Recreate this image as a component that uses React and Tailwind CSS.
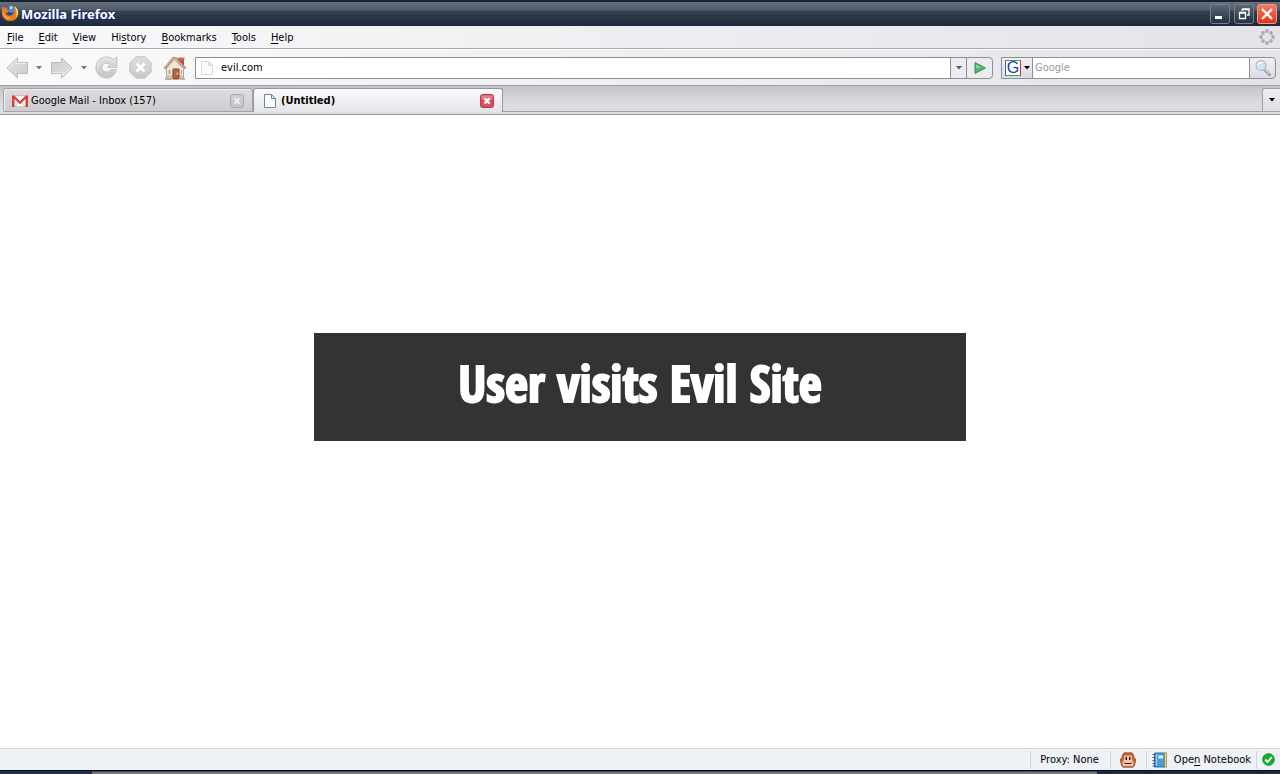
import React from 'react';

const ui = "font-['DejaVu_Sans_Condensed','DejaVu_Sans',sans-serif]";

function FirefoxLogo() {
  return (
    <svg width="18" height="18" viewBox="0 0 18 18" aria-hidden="true">
      <circle cx="9.500" cy="8" r="6.500" fill="#1d4a94" />
      <path d="M7 2.500c3-2 6-1 7 1.500l-1 4-3 1-2-2z" fill="#3f8fd6" />
      <path d="M9 2l3 .5-1 2.500-2 .5z" fill="#a9dcf5" />
      <path d="M2 2l1.500 2C5 3 6 3 7 3.500L6 5.500l2.500 1-1.500 2-2 .5c1 3 5 3.500 7 1 1.500-2 1.500-5 .5-7.500C16 4 17.500 6 17.500 9c0 5-4 8-8.500 8s-8-3.500-8-8c0-3 0-5 1-7z" fill="#ee7a1c" />
      <path d="M13 2c4 2 5.500 7 2 11.500C16 9 15.500 5 13 2z" fill="#fbe07a" />
      <path d="M1.500 5c0 5 3.500 9 9 9-4 2.500-10-1-9-9z" fill="#f9b54a" />
    </svg>
  );
}

function Arrow({ flip }) {
  return (
    <svg width="22" height="22" viewBox="0 0 22 22" className={flip ? 'rotate-180' : ''} aria-hidden="true">
      <defs>
        <linearGradient id="arrowFill" x1="0" y1="0" x2="1" y2="1">
          <stop offset="0" stopColor="#e4e4e4" />
          <stop offset="1" stopColor="#cacaca" />
        </linearGradient>
      </defs>
      <path d="M.8 11L11.500 1v4.500h10v11h-10V21z" fill="url(#arrowFill)" stroke="#bcbcbc" strokeLinejoin="round" />
      <path d="M2.500 11l8-7.500v3h10" fill="none" stroke="#ededed" />
    </svg>
  );
}

function Caret({ color = '#000' }) {
  return (
    <svg width="6" height="4" viewBox="0 0 6 4" aria-hidden="true">
      <path d="M0 0h6L3 3.600z" fill={color} />
    </svg>
  );
}

function Reload() {
  return (
    <svg width="23" height="23" viewBox="0 0 23 23" aria-hidden="true">
      <defs>
        <linearGradient id="reloadFill" x1="0" y1="0" x2="0" y2="1">
          <stop offset="0" stopColor="#e0e0e0" />
          <stop offset="1" stopColor="#c6c6c6" />
        </linearGradient>
      </defs>
      <path d="M18.300 3.800L22 1v10.500h-9.500L15 8.500c-4-3-8-.5-8 3 0 5 6.500 6 9 2h5.500C20 19.500 16 22 11.500 22 5.500 22 1 17.500 1 11.500S5.500 1 11.500 1c3 0 5 1 6.800 2.800z" fill="url(#reloadFill)" stroke="#c3c3c3" />
      <path d="M2.500 12C2.500 6 7 2.300 12 2.300c2.500 0 4.500 1 6.500 3L21 3" fill="none" stroke="#eaeaea" />
    </svg>
  );
}

function Stop() {
  return (
    <svg width="23" height="23" viewBox="0 0 23 23" aria-hidden="true">
      <defs>
        <linearGradient id="stopFill" x1="0" y1="0" x2="0" y2="1">
          <stop offset="0" stopColor="#dedede" />
          <stop offset="1" stopColor="#c8c8c8" />
        </linearGradient>
      </defs>
      <path d="M7 .8h9l6.200 6.200v9L16 22.200H7L.8 16V7z" fill="url(#stopFill)" stroke="#c3c3c3" />
      <path d="M7.500 7.500l8 8M15.500 7.500l-8 8" stroke="#fff" strokeWidth="3" />
    </svg>
  );
}

function Home() {
  return (
    <svg width="24" height="24" viewBox="0 0 24 24" aria-hidden="true">
      <path d="M15 2h6v10l-6-6z" fill="#c0533f" />
      <path d="M14.500 1.500h7v2h-7z" fill="#d4705c" />
      <path d="M3.500 12l8-8.500 9 9V22h-17z" fill="#efe5d8" stroke="#b9a893" />
      <path d="M4 19h16v3H4z" fill="#d9c5ab" />
      <path d="M1.500 12.500L10.500 2h2L22.500 12.500" fill="none" stroke="#a98070" strokeWidth="2.200" />
      <path d="M2 11.500L11 2h1l9.500 9.500" fill="none" stroke="#dcc2b2" />
      <path d="M10 13h6v10h-6z" fill="#b0654c" stroke="#854833" />
      <path d="M5.500 14h2v4h-2zM18 14h1v4h-1z" fill="#b5aaa0" />
      <circle cx="14.500" cy="17.500" r="1" fill="#ffdf18" />
      <path d="M2 23h7M17 23h5" stroke="#a8a58b" strokeWidth="1.500" />
    </svg>
  );
}

function Page({ stroke = '#718499' }) {
  return (
    <svg width="12" height="14" viewBox="0 0 12 14" className="shrink-0" aria-hidden="true">
      <path d="M.5.5h7l4 4v9H.5z" fill="#fafcfe" stroke={stroke} />
      <path d="M7.500.5v4h4z" fill="#e5eaf0" stroke={stroke} />
    </svg>
  );
}

function Gmail() {
  return (
    <svg width="16" height="12" viewBox="0 0 16 12" className="shrink-0" aria-hidden="true">
      <path d="M0 1h16v10H0z" fill="#fff" />
      <path d="M3 11l4-4M13 11L9 7" stroke="#e8b5b5" />
      <path d="M0 .5h2.500L8 6.300 13.500.5H16V12h-2.500V4L8 9.200 2.500 4v8H0z" fill="#dc3d3d" />
      <path d="M3 .5h10M3 11.500h10" stroke="#eeb3b3" />
    </svg>
  );
}

function TabClose({ active, label }) {
  return (
    <button aria-label={label} className="shrink-0">
      <svg width="14" height="14" viewBox="0 0 14 14" aria-hidden="true">
        <rect x=".5" y=".5" width="13" height="13" rx="2" fill={active ? '#d9505d' : '#c6c5c9'} stroke={active ? '#b33c48' : '#aaa9ad'} />
        <path d="M1.500 1.500h11v4h-11z" fill={active ? '#e58088' : '#cecdd0'} />
        <path d="M4.500 4.500l5 5M9.500 4.500l-5 5" stroke={active ? '#fff' : '#ededef'} strokeWidth="2.400" />
      </svg>
    </button>
  );
}

function Play() {
  return (
    <svg width="12" height="14" viewBox="0 0 12 14" aria-hidden="true">
      <path d="M1 1.500v11L11.500 7z" fill="#4bb46d" stroke="#3b9358" strokeLinejoin="round" />
      <path d="M2 3.500V7h6z" fill="#8ad3a0" />
    </svg>
  );
}

function Lens() {
  return (
    <svg width="18" height="18" viewBox="0 0 18 18" aria-hidden="true">
      <path d="M10 10l5.500 5.500" stroke="#8b8b8e" strokeWidth="2.800" strokeLinecap="round" />
      <path d="M10.500 10l5 5" stroke="#dadadc" strokeWidth="1.200" />
      <circle cx="7" cy="6.500" r="5" fill="#cbe5f1" stroke="#b4c3cd" strokeWidth="1.300" />
      <path d="M4 6c0-2 2-3 4-2" stroke="#fff" strokeWidth="1.500" fill="none" />
    </svg>
  );
}

const dots = [[8, 2], [12, 4], [14, 8], [12, 12], [8, 14], [4, 12], [2, 8], [4, 4]];

function Throbber() {
  return (
    <svg width="16" height="16" viewBox="0 0 16 16" aria-hidden="true">
      {dots.map(([x, y]) => <circle key={x + '-' + y} cx={x} cy={y} r="1.900" fill="#adadaf" />)}
    </svg>
  );
}

function Monkey() {
  return (
    <svg width="16" height="16" viewBox="0 0 16 16" aria-hidden="true">
      <path d="M4 .8h8l2 3v3h1.500v3.500H14l1.200 2-2.200 3H3l-2.200-3 1.200-2H.5V6.800H2v-3z" fill="#c4653a" stroke="#8f4424" strokeWidth=".7" />
      <path d="M4 4.500l1.500-1h1.500l1 1 1-1h1.500l1.500 1V8l1.800 2.500L13 14H3l-.8-3.500L4 8z" fill="#f8c3a0" />
      <path d="M5.500 5H7v3H5.500zM9 5h1.500v3H9z" fill="#20120e" />
      <path d="M4 10.500l1 1h6l1-1" fill="none" stroke="#351712" />
    </svg>
  );
}

function Notebook() {
  return (
    <svg width="16" height="16" viewBox="0 0 16 16" aria-hidden="true">
      <path d="M2.500 1h10v14h-10z" fill="#4a9cd6" stroke="#2d6ea3" />
      <path d="M12.500.8h2v14.400h-2z" fill="#efd98d" stroke="#8d7b3d" strokeWidth=".7" />
      <path d="M6.500 3.500h4.500v3H6.500z" fill="#e3f3fb" />
      <path d="M4.500 2v12" stroke="#a6d3f0" />
      <path d="M.5 2.500h3M.5 5.500h3M.5 8.500h3M.5 11.500h3M.5 14h3" stroke="#4f5866" />
    </svg>
  );
}

function Check() {
  return (
    <svg width="13" height="13" viewBox="0 0 13 13" aria-hidden="true">
      <circle cx="6.500" cy="6.500" r="6" fill="#14ac28" stroke="#109020" strokeWidth=".6" />
      <path d="M3.200 6.500l2.300 2.600L9.800 4" fill="none" stroke="#fff" strokeWidth="1.900" />
    </svg>
  );
}

const menus = [['', 'F', 'ile'], ['', 'E', 'dit'], ['', 'V', 'iew'], ['Hi', 's', 'tory'], ['', 'B', 'ookmarks'], ['', 'T', 'ools'], ['', 'H', 'elp']];
const frameButton = 'flex h-5 w-5 items-center justify-center rounded-[3px] border';

export default function App() {
  return (
    <div className={`flex min-h-screen flex-col bg-white text-[11px] leading-4 text-black ${ui}`}>
      <header>
        <div className="flex h-[26px] items-center justify-between border-t-2 border-[#1c2030] bg-[linear-gradient(#65717b_0,#505d69_8px,#354251_9px,#1d283a_100%)] pr-[3px] pl-px">
          <div className="flex items-center gap-[2px]">
            <div className="pb-[2px]"><FirefoxLogo /></div>
            <h1 className="font-['Noto_Sans','Open_Sans',sans-serif] text-[13px] leading-4 font-bold text-white [text-shadow:1px_1px_0_#1a1f8c]">Mozilla Firefox</h1>
          </div>
          <div className="flex gap-[3px]">
            <button aria-label="Minimize" className={`${frameButton} border-[#77818b] bg-linear-to-b from-[#596571] to-[#263241]`}>
              <svg width="12" height="12" aria-hidden="true"><path d="M1 8h7v3H1z" fill="#fff" /></svg>
            </button>
            <button aria-label="Restore" className={`${frameButton} ml-px border-[#77818b] bg-linear-to-b from-[#596571] to-[#263241]`}>
              <svg width="12" height="12" aria-hidden="true"><path d="M4 1h7v6H9M4 1.500h7M4 1v2M1.500 4.500h6v6h-6zM1 5h7" fill="none" stroke="#fff" strokeWidth="1.300" /></svg>
            </button>
            <button aria-label="Close" className={`${frameButton} border-[#f09c8d] bg-linear-to-b from-[#f17a61] to-[#e52d0c]`}>
              <svg width="12" height="12" aria-hidden="true"><path d="M1 1l10 10M11 1L1 11" stroke="#fff" strokeWidth="2.400" /></svg>
            </button>
          </div>
        </div>

        <nav aria-label="Menu" className="flex h-[23px] items-center border-b border-[#a9a9ad] bg-linear-to-r from-[#f9f9fb] to-[#e4e3e8] pr-[5px] pl-[7px]">
          <div className="flex flex-1 gap-[15px] pt-[2px]">
            {menus.map(([a, key, b]) => (
              <button key={a + key + b}>{a}<span className="underline underline-offset-2">{key}</span>{b}</button>
            ))}
          </div>
          <Throbber />
        </nav>

        <div className="flex h-9 items-center border-t border-white bg-linear-to-r from-[#fafafb] to-[#e4e3e8] pr-1 pl-[6px]">
          <div className="flex items-center gap-2">
            <button aria-label="Back"><Arrow /></button>
            <button aria-label="Back history" className="mr-px"><Caret color="#77777b" /></button>
            <button aria-label="Forward"><Arrow flip /></button>
            <button aria-label="Forward history"><Caret color="#77777b" /></button>
            <button aria-label="Reload"><Reload /></button>
            <button aria-label="Stop" className="ml-[3px]"><Stop /></button>
            <button aria-label="Home" className="ml-[3px]"><Home /></button>
          </div>
          <div className="ml-2 flex h-[22px] flex-1 rounded-r-[4px] border border-[#8e8e96] bg-[#ececf0]">
            <div className="flex flex-1 items-center gap-2 bg-white pl-[5px]">
              <Page stroke="#d3d9dd" />
              <input aria-label="Address" defaultValue="evil.com" className="h-4 min-w-0 flex-1 bg-transparent outline-none" />
            </div>
            <button aria-label="Show addresses" className="flex w-4 items-center justify-center border-l border-[#8e8e96]"><Caret color="#55555a" /></button>
            <button aria-label="Go" className="flex w-[26px] items-center justify-center border-l border-[#8e8e96]"><Play /></button>
          </div>
          <div className="ml-2 flex h-[22px] w-[275px] rounded-r-[4px] border border-[#8e8e96] bg-linear-to-b from-[#f1f1f4] to-[#dcdbe1]">
            <button aria-label="Choose search engine" className="flex w-[30px] items-center gap-[3px] pl-[3px]">
              <span className="flex h-4 w-4 items-center justify-center border border-t-[#39a849] border-r-[#e32727] border-b-[#39a849] border-l-[#3c63ce] bg-white font-['Liberation_Sans',sans-serif] text-base leading-4 text-[#1d3db4]">G</span>
              <Caret />
            </button>
            <input aria-label="Search" placeholder="Google" className="min-w-0 flex-1 border-x border-[#8e8e96] bg-white px-[2px] outline-none placeholder:text-[#999]" />
            <button aria-label="Search the web" className="flex w-[25px] items-center justify-center"><Lens /></button>
          </div>
        </div>

        <div className="flex h-[30px] items-stretch border-t border-[#a0a0a3] bg-linear-to-b from-[#c4c3c7] via-[#dad9de] to-[#dfdee3]">
          <div role="tablist" className="flex h-full flex-1 border-b border-[#97979a] pt-[2px] pl-[3px]">
            <div className="flex h-6 w-[250px] items-center rounded-t-[3px] border border-[#a3a3a7] bg-linear-to-b from-[#dddce1] to-[#cdccd1] px-2 pt-px shadow-[inset_1px_1px_0_#f0f0f2]">
              <button role="tab" aria-selected="false" className="flex flex-1 items-center gap-[3px]"><Gmail />Google Mail - Inbox (157)</button>
              <TabClose label="Close Google Mail" />
            </div>
            <div className="flex h-6 w-[250px] items-center rounded-t-[3px] border border-b-0 border-[#96969a] bg-linear-to-b from-[#fafafc] to-[#e5e4e9] pr-2 pl-[10px]">
              <button role="tab" aria-selected="true" className="flex flex-1 items-center gap-[5px] font-bold"><Page />(Untitled)</button>
              <TabClose active label="Close Untitled" />
            </div>
            <div className="h-6 flex-1 border-b border-[#a0a0a3]" />
          </div>
          <div className="border-b border-[#97979a] pt-[2px]">
            <button aria-label="List all tabs" className="flex h-6 w-[18px] items-center justify-center rounded-tl-[3px] border border-r-0 border-[#a3a3a7] bg-linear-to-b from-[#f0f0f3] to-[#dedde2]"><Caret /></button>
          </div>
        </div>
      </header>

      <main className="flex flex-1 items-center justify-center pb-[90px]">
        <section className="flex h-[108px] w-[51%] items-center justify-center bg-[#333] pb-2">
          <h2 className="font-[Impact,'Open_Sans_Condensed',sans-serif] text-[50px] leading-none font-bold whitespace-nowrap text-white [-webkit-text-stroke:2px_white]">User visits Evil Site</h2>
        </section>
      </main>

      <footer>
        <div className="flex h-[22px] items-center justify-end border-t border-[#d3d5d9] bg-[#eef1f6]">
          <div className="flex h-[18px] items-center border-l border-[#d0d2d8] pr-[11px] pl-[9px]">Proxy: None</div>
          <button aria-label="Greasemonkey" className="flex h-[18px] w-9 items-center justify-center border-l border-[#d0d2d8]"><Monkey /></button>
          <button className="flex h-[18px] items-center gap-[6px] border-l border-[#d0d2d8] px-[5px]">
            <Notebook />
            <span>Ope<span className="underline underline-offset-2">n</span> Notebook</span>
          </button>
          <div role="img" aria-label="Ready" className="flex h-[18px] w-6 items-center justify-center border-l border-[#d0d2d8]"><Check /></div>
        </div>
        <div className="flex h-1 border-t border-[#080b18]">
          <div className="w-[92px] bg-[#20304a]" />
          <div className="flex-1 border-t border-[#414852] bg-[#747980]" />
          <div className="w-[183px] bg-[#20293c]" />
        </div>
      </footer>
    </div>
  );
}
